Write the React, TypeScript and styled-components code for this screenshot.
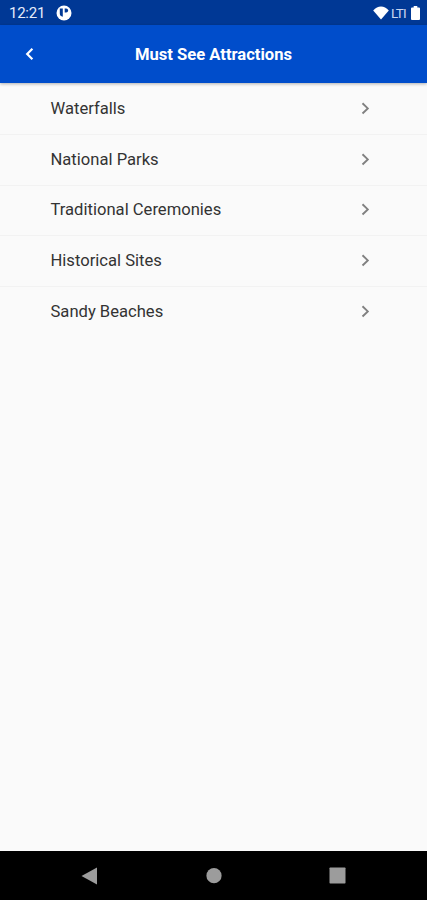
import React from "react";
import styled, { createGlobalStyle } from "styled-components";

const GlobalStyle = createGlobalStyle`
  html, body { margin: 0; padding: 0; background: #fafafa; }
  * { box-sizing: border-box; }
  svg { display: block; flex: none; }
`;

const Screen = styled.div`
  display: flex;
  flex-direction: column;
  width: 100%;
  height: 100vh;
  overflow: hidden;
  background: #fafafa;
  font-family: Roboto, "Liberation Sans", sans-serif;
`;

const StatusBar = styled.div`
  display: flex;
  align-items: center;
  justify-content: space-between;
  flex: none;
  height: 25px;
  padding: 1px 7px 0 9px;
  background: #003895;
  color: #e6ecfa;
`;

const StatusGroup = styled.div<{ $gap: number }>`
  display: flex;
  align-items: center;
  gap: ${(p) => p.$gap}px;
`;

const Clock = styled.span`
  width: 37px;
  font-size: 15px;
  line-height: 20px;
  letter-spacing: -0.25px;
  white-space: nowrap;
`;

const Network = styled.span`
  width: 18px;
  font-size: 13.5px;
  line-height: 20px;
  letter-spacing: -0.8px;
  white-space: nowrap;
  color: #c9d6f0;
`;

const AppBar = styled.header`
  display: grid;
  grid-template-columns: 59px 1fr 59px;
  align-items: center;
  flex: none;
  height: 58px;
  background: #004dcb;
  color: #fff;
  box-shadow: 0 1px 3px rgba(0, 0, 0, 0.3);
  z-index: 1;
`;

const BackButton = styled.button`
  display: flex;
  justify-content: center;
  padding: 0;
  border: 0;
  background: none;
  color: inherit;
`;

const Title = styled.h1`
  margin: 0;
  padding-top: 2px;
  font-size: 16.6px;
  line-height: 24px;
  font-weight: 700;
  text-align: center;
  white-space: nowrap;
`;

const List = styled.ul`
  flex: 1;
  margin: 0;
  padding: 1px 0 0;
  list-style: none;
`;

const Row = styled.li`
  display: flex;
  align-items: center;
  justify-content: space-between;
  height: 50.75px;
  padding: 0 57px 0 50.5px;
  border-bottom: 1px solid #f2f2f2;
  color: #333;
  font-size: 16.6px;
  line-height: 24px;

  &:last-child { border-bottom-color: transparent; }
`;

const NavBar = styled.nav`
  display: flex;
  align-items: center;
  flex: none;
  height: 49px;
  padding: 0 81px 0 80px;
  justify-content: space-between;
  background: #000;
  color: #9c9c9c;
`;

const items = [
  "Waterfalls",
  "National Parks",
  "Traditional Ceremonies",
  "Historical Sites",
  "Sandy Beaches",
];

const NotificationIcon = () => (
  <svg width="16" height="16" viewBox="0 0 16 16">
    <circle cx="8" cy="8" r="7.5" fill="#fff" />
    <path d="M3.8 3.6h3v8.2c-1.9-.2-3-1.4-3-3.2z" fill="#003895" />
    <path d="M8.7 3.6h1.4a2 2 0 0 1 0 4H8.7z" fill="#003895" />
  </svg>
);

const WifiIcon = () => (
  <svg width="16" height="14" viewBox="0 0 16 14">
    <path d="M.2 4.5C4.8-.8 11.2-.8 15.8 4.5L8 13.5z" fill="#fff" />
  </svg>
);

const BatteryIcon = () => (
  <svg width="9" height="14" viewBox="0 0 9 14">
    <path d="M2.7 0h3.6v1.5H8q1 0 1 1V13q0 1-1 1H1q-1 0-1-1V2.5q0-1 1-1h1.7z" fill="#fff" />
  </svg>
);

const Chevron = () => (
  <svg width="10" height="14" viewBox="0 0 10 14">
    <path d="M2.5 1.3 7.8 6.4l-5.3 5.1" fill="none" stroke="#808080" strokeWidth="1.9" />
  </svg>
);

export default function App() {
  return (
    <Screen>
      <GlobalStyle />
      <StatusBar>
        <StatusGroup $gap={10}>
          <Clock>12:21</Clock>
          <NotificationIcon />
        </StatusGroup>
        <StatusGroup $gap={2}>
          <WifiIcon />
          <Network>LTI</Network>
          <BatteryIcon />
        </StatusGroup>
      </StatusBar>
      <AppBar>
        <BackButton aria-label="Back">
          <svg width="10" height="14" viewBox="0 0 10 14">
            <path d="M7.4 1.8 2.2 7l5.2 5.2" fill="none" stroke="#fff" strokeWidth="2.2" />
          </svg>
        </BackButton>
        <Title>Must See Attractions</Title>
      </AppBar>
      <List>
        {items.map((item) => (
          <Row key={item}>
            <span>{item}</span>
            <Chevron />
          </Row>
        ))}
      </List>
      <NavBar>
        <svg width="18" height="18" viewBox="0 0 18 18">
          <path d="M17 0.5v17L1.5 9z" fill="currentColor" />
        </svg>
        <svg width="16" height="16" viewBox="0 0 16 16">
          <circle cx="8" cy="7.7" r="7.6" fill="currentColor" />
        </svg>
        <svg width="17" height="17" viewBox="0 0 17 17">
          <rect x=".5" y=".5" width="16" height="16" rx=".7" fill="currentColor" />
        </svg>
      </NavBar>
    </Screen>
  );
}
